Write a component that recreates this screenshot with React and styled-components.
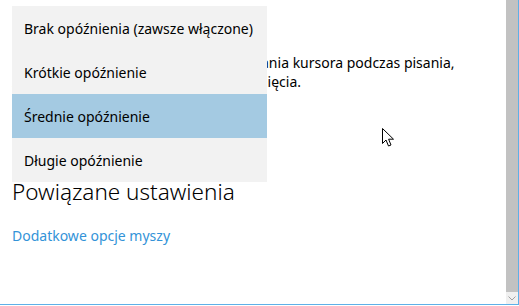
import React from "react";
import styled, { createGlobalStyle } from "styled-components";

const Global = createGlobalStyle`
  html, body { margin: 0; padding: 0; background: #fff; }
  body { font-family: "Noto Sans", "Segoe UI", sans-serif; }
`;

const Frame = styled.div`
  width: 518px;
  height: 304px;
  border-right: 1px solid #5eb0e8;
  border-bottom: 1px solid #5eb0e8;
  display: flex;
  background: #fff;
  overflow: hidden;
`;

const Content = styled.div`
  position: relative;
  flex: 1;
  min-width: 0;
  padding: 53px 12px 0 12px;
  color: #000;
`;

const Paragraph = styled.p`
  margin: 0;
  font-size: 14px;
  line-height: 19px;
  white-space: nowrap;
`;

const Line = styled.span`
  display: block;
  padding-left: ${(p) => p.$indent || 0}px;
  word-spacing: ${(p) => p.$wordSpacing || 0}px;
`;

const Heading = styled.h2`
  margin: 87px 0 0 0;
  font-size: 22.5px;
  font-weight: 300;
  line-height: 28px;
  color: #000;
`;

const Link = styled.a`
  display: inline-block;
  margin-top: 20px;
  font-size: 14px;
  line-height: 20px;
  color: #3393d8;
  text-decoration: none;
`;

const Menu = styled.ul`
  position: absolute;
  left: 12px;
  top: 6px;
  width: 255px;
  margin: 0;
  padding: 0;
  list-style: none;
  background: #f2f2f2;
`;

const Item = styled.li`
  height: 44px;
  display: flex;
  align-items: center;
  padding: 0 12px;
  font-size: 14px;
  white-space: nowrap;
  color: #000;
  background: ${(p) => (p.$selected ? "#a4cae2" : "transparent")};
`;

const Scrollbar = styled.div`
  width: 12px;
  display: flex;
  flex-direction: column;
`;

const Thumb = styled.div`
  flex: 1;
  background: #c2c2c2;
`;

const ArrowButton = styled.div`
  height: 12px;
  background: #f0f0f0;
  display: flex;
  align-items: center;
  justify-content: center;
`;

const Cursor = styled.svg`
  position: absolute;
  left: 382px;
  top: 128px;
`;

const items = [
  "Brak opóźnienia (zawsze włączone)",
  "Krótkie opóźnienie",
  "Średnie opóźnienie",
  "Długie opóźnienie",
];

export default function App() {
  return (
    <>
      <Global />
      <Frame>
        <Content>
          <Paragraph>
            <Line $indent={2}>
              Aby uniknąć przypadkowego przesuwania kursora podczas pisania,
            </Line>
            <Line $wordSpacing={-1}>
              zmień opóźnienie przed aktywacją kliknięcia.
            </Line>
          </Paragraph>
          <Heading>Powiązane ustawienia</Heading>
          <Link href="#">Dodatkowe opcje myszy</Link>
          <Menu>
            {items.map((t, i) => (
              <Item key={t} $selected={i === 2}>
                {t}
              </Item>
            ))}
          </Menu>
          <Cursor width="13" height="20" viewBox="0 0 13 20">
            <path
              d="M0.5 0.5 L0.5 15.5 L4 12 L6.5 18 L9 17 L6.6 11.2 L11.5 11.2 Z"
              fill="#fff"
              stroke="#000"
              strokeWidth="1"
              strokeLinejoin="miter"
            />
          </Cursor>
        </Content>
        <Scrollbar>
          <Thumb />
          <ArrowButton>
            <svg width="8" height="5" viewBox="0 0 8 5">
              <path d="M0.5 0.5 L4 4 L7.5 0.5" fill="none" stroke="#a0a0a0" strokeWidth="1" />
            </svg>
          </ArrowButton>
        </Scrollbar>
      </Frame>
    </>
  );
}
